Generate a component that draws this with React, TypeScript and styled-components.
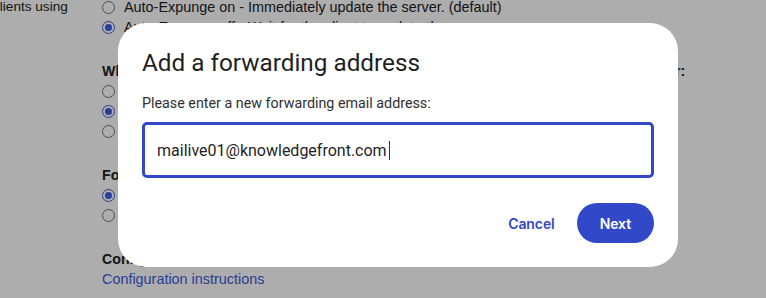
import React from "react";
import styled, { createGlobalStyle } from "styled-components";

const GlobalStyle = createGlobalStyle`
  html, body { margin: 0; padding: 0; background: #ffffff; overflow: hidden; }
  body { font-family: "Liberation Sans", Arial, sans-serif; }
  * { box-sizing: border-box; }
`;

const BLUE = "#3148c8";

const Page = styled.div`
  display: grid;
  grid-template-columns: 102px 1fr;
  margin-top: -3px;
  color: #202124;
  font-size: 14.4px;
  line-height: 20px;
  white-space: nowrap;
`;

const LabelCell = styled.div`
  margin-left: -7px;
  font-size: 13.6px;
`;

const Column = styled.div`
  display: flex;
  flex-direction: column;
`;

const Section = styled.div<{ $gap?: number }>`
  display: flex;
  flex-direction: column;
  margin-top: ${(p) => p.$gap ?? 0}px;
`;

const Heading = styled.div`
  font-weight: 700;
  font-size: 14.2px;
`;

const OptionRow = styled.label`
  display: flex;
  align-items: center;
  gap: 9px;
  height: 20px;
`;

const RadioDot = styled.span<{ $checked?: boolean }>`
  width: 13px;
  height: 13px;
  border-radius: 50%;
  flex: none;
  border: ${(p) => (p.$checked ? `1.5px solid #3b5bdb` : `1px solid #767676`)};
  background: #fff;
  display: grid;
  place-items: center;
  &::after {
    content: "";
    width: 7px;
    height: 7px;
    border-radius: 50%;
    background: ${(p) => (p.$checked ? "#3b5bdb" : "transparent")};
  }
`;

const Link = styled.a`
  color: #3b5bdb;
  text-decoration: none;
`;

const Scrim = styled.div`
  position: fixed;
  inset: 0;
  background: rgba(0, 0, 0, 0.32);
  display: flex;
  align-items: flex-start;
  justify-content: flex-start;
  padding: 23px 0 0 118px;
`;

const Dialog = styled.div`
  width: 560px;
  background: #ffffff;
  border-radius: 28px;
  padding: 24px;
  display: flex;
  flex-direction: column;
  font-family: Roboto, "Noto Sans", sans-serif;
  color: #1f1f1f;
`;

const Title = styled.h2`
  margin: 0;
  font-size: 24.3px;
  line-height: 32px;
  font-weight: 400;
`;

const Prompt = styled.p`
  margin: 14px 0 0;
  font-size: 14.3px;
  line-height: 20px;
  color: #303030;
`;

const Field = styled.div`
  margin-top: 9px;
  height: 56px;
  border: 3px solid ${BLUE};
  border-radius: 5px;
  padding: 0 12px;
  display: flex;
  align-items: center;
  font-size: 16px;
  color: #1f1f1f;
`;

const Caret = styled.span`
  display: inline-block;
  width: 1px;
  height: 19px;
  margin-left: 2px;
  background: #1a2f9e;
`;

const Actions = styled.div`
  margin-top: 25px;
  display: flex;
  justify-content: flex-end;
  align-items: center;
  gap: 10px;
`;

const ActionButton = styled.button<{ $primary?: boolean }>`
  height: 40px;
  border-radius: 20px;
  border: none;
  padding: 0 ${(p) => (p.$primary ? 23 : 12)}px;
  font-family: Inter, Roboto, sans-serif;
  font-size: 14px;
  font-weight: 600;
  letter-spacing: -0.1px;
  background: ${(p) => (p.$primary ? BLUE : "transparent")};
  color: ${(p) => (p.$primary ? "#ffffff" : BLUE)};
  cursor: pointer;
`;

export default function App() {
  return (
    <>
      <GlobalStyle />
      <Page>
        <LabelCell>clients using</LabelCell>
        <Column>
          <Section>
            <OptionRow>
              <RadioDot />
              Auto-Expunge on - Immediately update the server. (default)
            </OptionRow>
            <OptionRow>
              <RadioDot $checked />
              Auto-Expunge off - Wait for the client to update the server.
            </OptionRow>
          </Section>
          <Section $gap={24}>
            <Heading>
              When a message is marked as deleted and expunged from the last visible IMAP folder:
            </Heading>
            <OptionRow>
              <RadioDot />
              Archive the message (default)
            </OptionRow>
            <OptionRow>
              <RadioDot $checked />
              Move the message to the Trash
            </OptionRow>
            <OptionRow>
              <RadioDot />
              Immediately delete the message forever
            </OptionRow>
          </Section>
          <Section $gap={24}>
            <Heading>Folder size limits</Heading>
            <OptionRow>
              <RadioDot $checked />
              Do not limit the number of messages in an IMAP folder (default)
            </OptionRow>
            <OptionRow>
              <RadioDot />
              Limit IMAP folders to contain no more than this many messages
            </OptionRow>
          </Section>
          <Section $gap={24}>
            <Heading>Configure your email client (e.g. Outlook, Eudora, Netscape Mail)</Heading>
            <Link href="#">Configuration instructions</Link>
          </Section>
        </Column>
      </Page>
      <Scrim>
        <Dialog role="dialog" aria-label="Add a forwarding address">
          <Title>Add a forwarding address</Title>
          <Prompt>Please enter a new forwarding email address:</Prompt>
          <Field>
            mailive01@knowledgefront.com
            <Caret />
          </Field>
          <Actions>
            <ActionButton>Cancel</ActionButton>
            <ActionButton $primary>Next</ActionButton>
          </Actions>
        </Dialog>
      </Scrim>
    </>
  );
}
